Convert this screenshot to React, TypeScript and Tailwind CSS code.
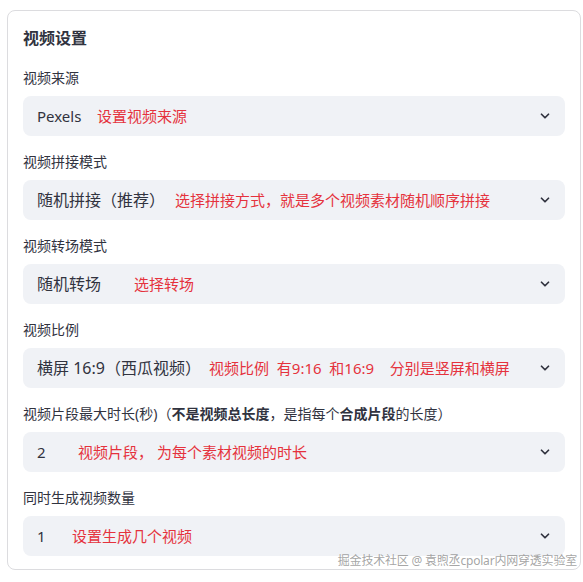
import React from "react";

const fields = [
  { label: <>视频来源</>, value: "Pexels", w: "w-[60px]", size: "text-[15px]", note: "设置视频来源" },
  { label: <>视频拼接模式</>, value: "随机拼接（推荐）", w: "w-[138px]", size: "text-[16px]", note: "选择拼接方式，就是多个视频素材随机顺序拼接" },
  { label: <>视频转场模式</>, value: "随机转场", w: "w-[97px]", size: "text-[16px]", note: "选择转场" },
  { label: <>视频比例</>, value: "横屏 16:9（西瓜视频）", w: "w-[172px]", size: "text-[16px]", note: "视频比例  有9:16  和16:9    分别是竖屏和横屏" },
  {
    label: (
      <>
        视频片段最大时长(秒)（<b className="font-bold">不是视频总长度</b>，是指每个<b className="font-bold">合成片段</b>的长度）
      </>
    ),
    value: "2",
    w: "w-[41px]",
    size: "text-[15px]",
    note: "视频片段， 为每个素材视频的时长",
  },
  { label: <>同时生成视频数量</>, value: "1", w: "w-[35px]", size: "text-[15px]", note: "设置生成几个视频" },
];

function Chevron() {
  return (
    <svg width="14" height="14" viewBox="0 0 24 24" fill="none" stroke="#31333f" strokeWidth="3" strokeLinecap="round" strokeLinejoin="round">
      <path d="M6 9l6 6 6-6" />
    </svg>
  );
}

export default function App() {
  return (
    <div
      className="w-[583px] h-[582px] bg-white pt-[10px] pl-[7px] pr-[2px] relative"
      style={{ fontFamily: '"Noto Sans", "Noto Sans CJK SC", sans-serif' }}
    >
      <div className="border border-[#dcdcdf] rounded-lg px-[15px] pt-[15px] pb-[13px] text-[#31333f]">
        <div className="text-[16px] font-bold leading-6">视频设置</div>
        <div className="mt-[18px] flex flex-col gap-4">
          {fields.map((f, i) => (
            <div key={i} className="flex flex-col gap-2">
              <div className="text-[14px] leading-5 whitespace-pre">{f.label}</div>
              <div className="h-10 bg-[#f0f2f6] rounded-lg flex items-center pl-[14px] pr-[13px]">
                <span className={`${f.w} ${f.size} shrink-0 whitespace-pre`}>{f.value}</span>
                <span className="flex-1 text-[15px] text-[#e5323d] whitespace-pre">{f.note}</span>
                <Chevron />
              </div>
            </div>
          ))}
        </div>
      </div>
      <div className="absolute right-[6px] top-[553px] text-[12px] tracking-[-0.2px] text-[#9a9a9a]/90 leading-4">
        掘金技术社区 @ 袁煦丞cpolar内网穿透实验室
      </div>
    </div>
  );
}
